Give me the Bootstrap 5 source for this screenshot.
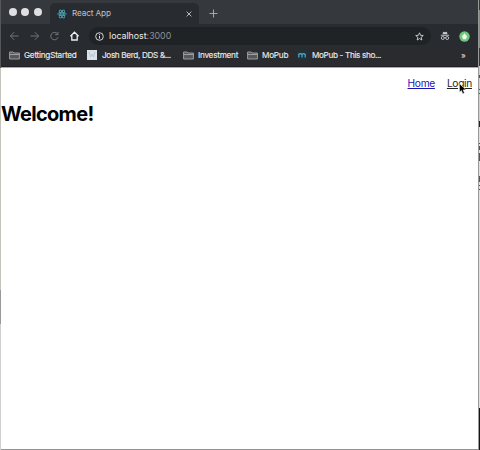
<!DOCTYPE html>
<html lang="en">
<head>
<meta charset="utf-8">
<meta name="viewport" content="width=device-width, initial-scale=1">
<title>React App</title>
<link href="https://cdn.jsdelivr.net/npm/bootstrap@5.3.0/dist/css/bootstrap.min.css" rel="stylesheet">
<style>
body{width:480px;height:450px;overflow:hidden;font-family:Inter,"Liberation Sans",sans-serif;background:#e2e2e2;color:#000}
svg{display:block;flex:none}
.edge-left{width:1px;background:linear-gradient(#55575a 0 68px,#c4c4bd 68px 290px,#999 290px 324px,#d0d0d0 324px)}
.browser{width:477px;border-bottom:1px solid #939393;background:#fff}
.tabstrip{height:24px;background:#35383d;padding-left:7.5px}
.lights{gap:4.5px;width:41.5px;padding-top:7.5px}
.light{width:8px;height:8px;background:#dfdfe1}
.tab-item{width:149px;height:21px;margin-top:3px;background:#282b2f;border-radius:5px 5px 0 0;padding:0 7px;color:#c0c2c4;font-size:8.2px;letter-spacing:-.12px}
.tab-name{margin-left:5px}
.plus{margin:3px 0 0 10px}
.toolbar{height:24px;background:#282b2f;padding-left:8px}
.address{width:342px;height:18px;background:#202326;border-radius:9px;margin-left:7px;padding:0 7px 0 6px;font-size:8.8px;color:#eee}
.url{margin-left:5px}
.port{color:#8e9195}
.bookmarks{height:19px;background:#292b2f;padding:0 0 3px 8px;font-size:8.2px;color:#e8e8e9;border-bottom:1px solid #202124}
.bm{gap:5px;white-space:nowrap;letter-spacing:-.25px;-webkit-text-stroke:.15px}
.b1{width:78px;gap:4px}.b2{width:96px}.b3{width:64px;gap:4px}.b4{width:50px;gap:4px}.b5{width:164px;letter-spacing:-.35px}
.b2{letter-spacing:-.35px}
.page{border-top:1px solid #aaa9ab;height:382px}
.links{padding:8px 6px 0 0;gap:12px;font-size:10.2px;letter-spacing:-.3px;line-height:14px}
.home{color:#1a12b5}.login{color:#222}
.home,.login{text-decoration:underline;text-underline-offset:1px}
.title{font-size:20px;font-weight:700;line-height:24px;margin:12px 0 0 0;letter-spacing:-.7px}
.edge-right{width:2px;background:linear-gradient(#35383d 0 10px,#85878a 10px 48px,#35383d 48px 66px,#cfcfcf 66px 121px,#222 121px 127px,#dedede 127px 408px,#151515 408px);border-left:1px solid #999}
.behind{position:absolute;left:479px;top:72px}
.pointer{position:absolute;left:459px;top:83px}
</style>
</head>
<body class="d-flex position-relative m-0">
<div class="edge-left"></div>
<main class="browser d-flex flex-column">
  <div class="tabstrip d-flex">
    <div class="lights d-flex"><span class="light rounded-circle"></span><span class="light rounded-circle"></span><span class="light rounded-circle"></span></div>
    <div class="tab-item d-flex align-items-center">
      <svg width="10" height="10" viewBox="0 0 10 10"><rect width="10" height="10" rx="1" fill="#20282d"/><g fill="none" stroke="#4f9dac" stroke-width=".9"><ellipse cx="5" cy="5" rx="4.4" ry="1.7"/><ellipse cx="5" cy="5" rx="4.4" ry="1.7" transform="rotate(60 5 5)"/><ellipse cx="5" cy="5" rx="4.4" ry="1.7" transform="rotate(120 5 5)"/></g><circle cx="5" cy="5" r=".8" fill="#61c3dc"/></svg>
      <span class="tab-name flex-grow-1 text-nowrap">React App</span>
      <svg width="6" height="6" viewBox="0 0 6 6"><path d="M.6.6l4.8 4.8M5.4.6L.6 5.4" stroke="#b9bbbd" stroke-width="1"/></svg>
    </div>
    <svg class="plus align-self-center" width="9" height="9" viewBox="0 0 9 9"><path d="M4.5.5v8M.5 4.5h8" stroke="#a2a4a7" stroke-width="1.1"/></svg>
  </div>
  <div class="toolbar d-flex align-items-center">
    <svg width="73" height="12" viewBox="0 0 73 12" fill="none" stroke="#72757a" stroke-width="1"><path d="M9.5 6H1.5M5.2 2.2L1.4 6l3.8 3.8M21.5 6h8M25.8 2.2L29.6 6l-3.8 3.8"/><path d="M48.5 4A3.7 3.7 0 1 0 49 7.2M49 1.9v2.7h-2.8"/><path d="M61.4 6.2L65.5 2.2 69.6 6.2M62.8 5.3v4.7h5.4V5.3" stroke="#eee" stroke-width="1.3"/></svg>
    <div class="address d-flex align-items-center">
      <svg width="9" height="9" viewBox="0 0 9 9"><circle cx="4.5" cy="4.5" r="3.8" fill="none" stroke="#e7e7e7" stroke-width=".9"/><path d="M4.5 4v2.6M4.5 2.2v1" stroke="#e7e7e7"/></svg>
      <span class="url flex-grow-1">localhost<span class="port">:3000</span></span>
      <svg width="9" height="9" viewBox="0 0 10 10"><path d="M5 .9l1.2 2.8 3 .2-2.3 2 .7 3L5 7.3 2.4 8.9l.7-3-2.3-2 3-.2z" fill="none" stroke="#d2d3d4"/></svg>
    </div>
    <svg class="ms-2" width="12" height="10" viewBox="0 0 12 10"><path d="M3.5 3.2L4.2.8 6 1.2 7.8.8l.7 2.4z" fill="#c7c8c9"/><path d="M1.8 4.3h8.4" stroke="#c7c8c9" stroke-width=".9"/><g fill="none" stroke="#c7c8c9" stroke-width=".9"><circle cx="3.8" cy="7" r="1.5"/><circle cx="8.2" cy="7" r="1.5"/><path d="M5.3 6.8q.7-.5 1.4 0"/></g></svg>
    <svg class="ms-2" width="11" height="11" viewBox="0 0 11 11"><circle cx="5.5" cy="5.5" r="5.2" fill="#70c67d"/><path d="M5.5 2.2L8 5.2 7 8.2H4L3 5.2z" fill="#eefbea"/></svg>
  </div>
  <div class="bookmarks d-flex align-items-center">
    <div class="bm b1 d-flex align-items-center"><svg width="11" height="9" viewBox="0 0 11 9"><path d="M.6 1h3.5l1 1h5.3v6H.6zM.6 3.5h9.8" fill="#55575a" stroke="#a5a6a8" stroke-width=".9"/></svg><span>GettingStarted</span></div>
    <div class="bm b2 d-flex align-items-center"><svg width="10" height="10" viewBox="0 0 10 10"><rect width="10" height="10" fill="#d7e3e8"/><path d="M2 2l1.6 5L5 4l1.4 3L8 2" fill="none" stroke="#b1c0c9" stroke-width=".8"/></svg><span>Josh Berd, DDS &amp;...</span></div>
    <div class="bm b3 d-flex align-items-center"><svg width="11" height="9" viewBox="0 0 11 9"><path d="M.6 1h3.5l1 1h5.3v6H.6zM.6 3.5h9.8" fill="#55575a" stroke="#a5a6a8" stroke-width=".9"/></svg><span>Investment</span></div>
    <div class="bm b4 d-flex align-items-center"><svg width="11" height="9" viewBox="0 0 11 9"><path d="M.6 1h3.5l1 1h5.3v6H.6zM.6 3.5h9.8" fill="#55575a" stroke="#a5a6a8" stroke-width=".9"/></svg><span>MoPub</span></div>
    <div class="bm b5 d-flex align-items-center"><svg width="10" height="10" viewBox="0 0 10 10"><rect width="10" height="10" rx="1" fill="#203139"/><path d="M1.8 7.5V3.4M1.8 4.5q1.6-1.7 3.2 0v3M5 4.5q1.6-1.7 3.2 0v3" fill="none" stroke="#4eacd0" stroke-width="1.2"/></svg><span>MoPub - This sho...</span></div>
    <span>»</span>
  </div>
  <div class="page">
    <nav class="links d-flex justify-content-end"><a class="home" href="#">Home</a><a class="login" href="#">Login</a></nav>
    <h1 class="title">Welcome!</h1>
  </div>
</main>
<div class="edge-right"></div>
<svg class="behind" width="1" height="124" viewBox="0 0 1 124"><path d="M.5 3v3M.5 17v1M.5 21v1M.5 71v1M.5 74v4M.5 81v8M.5 104v6M.5 113v1M.5 117v1" stroke="#555"/></svg>
<svg class="pointer" width="8" height="12" viewBox="0 0 8 12"><path d="M.5.7v8.5l1.9-1.7 1.4 3.2 1.7-.7-1.4-3.1 2.8-.2z" fill="#000" stroke="#fff" stroke-width=".5"/></svg>
<script src="https://cdn.jsdelivr.net/npm/bootstrap@5.3.0/dist/js/bootstrap.bundle.min.js"></script>
</body>
</html>
